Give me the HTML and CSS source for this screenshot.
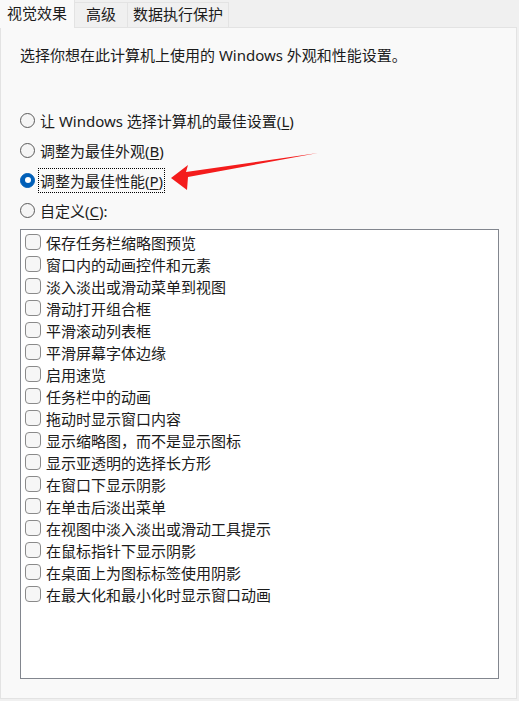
FILE: index.html
```html
<!DOCTYPE html>
<html lang="zh-CN">
<head>
<meta charset="utf-8">
<link rel="stylesheet" href="styles.css">
</head>
<body>
<div class="window">
  <div class="tabs">
    <div class="tab active">视觉效果</div>
    <div class="tab t2">高级</div>
    <div class="tab t3">数据执行保护</div>
  </div>
  <div class="panel">
    <p class="desc">选择你想在此计算机上使用的 Windows 外观和性能设置。</p>
    <div class="radios">
      <div class="radio"><span class="circle"></span><span class="lbl">让 Windows 选择计算机的最佳设置(<u>L</u>)</span></div>
      <div class="radio"><span class="circle"></span><span class="lbl">调整为最佳外观(<u>B</u>)</span></div>
      <div class="radio checked"><span class="circle"><span class="dot"></span></span><span class="lbl focus">调整为最佳性能(<u>P</u>)</span></div>
      <div class="radio"><span class="circle"></span><span class="lbl">自定义(<u>C</u>):</span></div>
    </div>
    <div class="listbox">
      <div class="item"><span class="box"></span>保存任务栏缩略图预览</div>
      <div class="item"><span class="box"></span>窗口内的动画控件和元素</div>
      <div class="item"><span class="box"></span>淡入淡出或滑动菜单到视图</div>
      <div class="item"><span class="box"></span>滑动打开组合框</div>
      <div class="item"><span class="box"></span>平滑滚动列表框</div>
      <div class="item"><span class="box"></span>平滑屏幕字体边缘</div>
      <div class="item"><span class="box"></span>启用速览</div>
      <div class="item"><span class="box"></span>任务栏中的动画</div>
      <div class="item"><span class="box"></span>拖动时显示窗口内容</div>
      <div class="item"><span class="box"></span>显示缩略图，而不是显示图标</div>
      <div class="item"><span class="box"></span>显示亚透明的选择长方形</div>
      <div class="item"><span class="box"></span>在窗口下显示阴影</div>
      <div class="item"><span class="box"></span>在单击后淡出菜单</div>
      <div class="item"><span class="box"></span>在视图中淡入淡出或滑动工具提示</div>
      <div class="item"><span class="box"></span>在鼠标指针下显示阴影</div>
      <div class="item"><span class="box"></span>在桌面上为图标标签使用阴影</div>
      <div class="item"><span class="box"></span>在最大化和最小化时显示窗口动画</div>
    </div>
  </div>
  <svg class="arrow" width="519" height="701" viewBox="0 0 519 701">
    <polygon points="171,178 188,165 186,172 318,153 188,177 187,190" fill="#f41c1c"/>
  </svg>
</div>
</body>
</html>
```

FILE: styles.css
```css
* { box-sizing: border-box; }
html, body { margin: 0; padding: 0; }
body {
  background: #f0f0f0;
  font-family: "Noto Sans", "Noto Sans CJK SC", sans-serif;
  color: #1b1b1b;
}
.window {
  position: relative;
  width: 519px;
  height: 701px;
}
.tabs {
  display: flex;
  height: 27px;
  align-items: flex-end;
}
.tab {
  height: 25px;
  font-size: 15px;
  line-height: 23px;
  text-align: center;
  background: #f0f0f0;
  border: 1px solid #e3e3e3;
  border-bottom: none;
}
.tab.active {
  width: 75px;
  height: 28px;
  line-height: 26px;
  background: #f9f9f9;
  border-color: #e3e3e3;
  border-top: none;
  border-left: none;
  margin-bottom: -1px;
  position: relative;
  z-index: 1;
}
.t2 { width: 53px; border-left: none; }
.t3 { width: 101px; border-left: none; }
.panel {
  width: 517px;
  height: 672px;
  background: #f9f9f9;
  border: 1px solid #e3e3e3;
  padding: 17px 0 0 19px;
}
.desc {
  margin: 0;
  font-size: 15px;
  line-height: 20px;
  height: 20px;
}
.radios {
  margin-top: 40px;
  display: flex;
  flex-direction: column;
}
.radio {
  height: 30px;
  display: flex;
  align-items: center;
  gap: 5px;
  font-size: 15px;
}
.circle {
  width: 15px;
  height: 15px;
  border-radius: 50%;
  border: 1px solid #5a5a5a;
  background: #f5f5f5;
  display: flex;
  align-items: center;
  justify-content: center;
  flex: none;
}
.checked .circle {
  background: #005fb8;
  border-color: #005fb8;
}
.dot {
  width: 6px;
  height: 6px;
  border-radius: 50%;
  background: #fff;
}
.lbl u { text-decoration: underline; text-underline-offset: 2px; }
.focus {
  outline: 1px dotted #000;
  outline-offset: 1px;
  padding: 0;
}
.listbox {
  margin-top: 4px;
  width: 479px;
  height: 450px;
  background: #fff;
  border: 1px solid #82868e;
  padding: 1px 0 0 4px;
}
.item {
  height: 22px;
  display: flex;
  align-items: center;
  gap: 5px;
  font-size: 15px;
}
.box {
  width: 16px;
  height: 16px;
  border: 1px solid #8a8a8a;
  border-radius: 4px;
  background: #f6f6f6;
  flex: none;
}
.arrow {
  position: absolute;
  left: 0;
  top: 0;
  pointer-events: none;
}
```
